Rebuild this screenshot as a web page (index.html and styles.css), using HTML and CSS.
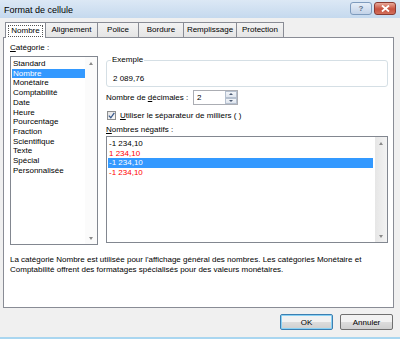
FILE: index.html
```html
<!DOCTYPE html>
<html lang="fr">
<head>
    <meta charset="UTF-8">
    <title>Format de cellule</title>
    <link rel="stylesheet" href="styles.css">
</head>
<body>
    <div class="window">
        <div class="titlebar">
            <span class="title">Format de cellule</span>
            <div class="caption-btns">
                <span class="cap-btn help">?</span>
                <span class="cap-btn close">
                    <svg width="9" height="7" viewBox="0 0 9 7"><path d="M1 0.5 L8 6.5 M8 0.5 L1 6.5" stroke="#fff" stroke-width="1.8"/></svg>
                </span>
            </div>
        </div>

        <div class="tabs">
            <div class="tab active"><span class="focus">Nombre</span></div>
            <div class="tab w-align">Alignement</div>
            <div class="tab w-police">Police</div>
            <div class="tab w-bordure">Bordure</div>
            <div class="tab w-rempl">Remplissage</div>
            <div class="tab w-prot">Protection</div>
        </div>

        <div class="panel">
            <div class="columns">
                <div class="cat-col">
                    <div class="label"><u>C</u>atégorie :</div>
                    <div class="listbox cat-list">
                        <ul class="items">
                            <li>Standard</li>
                            <li class="selected">Nombre</li>
                            <li>Monétaire</li>
                            <li>Comptabilité</li>
                            <li>Date</li>
                            <li>Heure</li>
                            <li>Pourcentage</li>
                            <li>Fraction</li>
                            <li>Scientifique</li>
                            <li>Texte</li>
                            <li>Spécial</li>
                            <li>Personnalisée</li>
                        </ul>
                        <div class="vscroll light">
                            <span class="arrow up"></span>
                            <span class="arrow down"></span>
                        </div>
                    </div>
                </div>

                <div class="opts-col">
                    <fieldset class="sample">
                        <legend>Exemple</legend>
                        <div class="sample-value">2 089,76</div>
                    </fieldset>

                    <div class="row decimals">
                        <span class="row-label">Nombre de <u>d</u>écimales :</span>
                        <div class="spin">
                            <span class="spin-value">2</span>
                            <div class="spin-btns">
                                <span class="spin-btn"><span class="arrow up"></span></span>
                                <span class="spin-btn"><span class="arrow down"></span></span>
                            </div>
                        </div>
                    </div>

                    <div class="row check">
                        <span class="checkbox">
                            <svg width="7" height="7" viewBox="0 0 7 7"><path d="M0.8 3.6 L2.8 5.8 L6.3 0.8" fill="none" stroke="#3a5a8c" stroke-width="1.3"/></svg>
                        </span>
                        <span class="row-label"><u>U</u>tiliser le séparateur de milliers ( )</span>
                    </div>

                    <div class="label"><u>N</u>ombres négatifs :</div>
                    <div class="listbox neg-list">
                        <ul class="items">
                            <li>-1 234,10</li>
                            <li class="red">1 234,10</li>
                            <li class="selected">-1 234,10</li>
                            <li class="red">-1 234,10</li>
                        </ul>
                        <div class="vscroll">
                            <span class="arrow up"></span>
                            <span class="arrow down"></span>
                        </div>
                    </div>
                </div>
            </div>

            <p class="desc">La catégorie Nombre est utilisée pour l'affichage général des nombres. Les catégories Monétaire et Comptabilité offrent des formatages spécialisés pour des valeurs monétaires.</p>
        </div>

        <div class="footer">
            <button class="btn default">OK</button>
            <button class="btn">Annuler</button>
        </div>
    </div>
</body>
</html>
```

FILE: styles.css
```css
* {
    box-sizing: border-box;
}
body {
    margin: 0;
    background: #f0f0f0;
    font-family: "Liberation Sans", Arial, sans-serif;
    font-size: 8px;
    color: #000;
}
.window {
    width: 400px;
    height: 339px;
    border-bottom: 2px solid #a9d6f0;
    overflow: hidden;
}
u {
    text-decoration: underline;
}

/* title bar */
.titlebar {
    height: 18px;
    display: flex;
    justify-content: space-between;
    align-items: center;
    padding-left: 4px;
    padding-right: 4px;
    background: linear-gradient(#dce8f5, #c5d9ee);
}
.title {
    font-size: 9px;
    margin-top: 1px;
}
.caption-btns {
    display: flex;
    gap: 2px;
    margin-top: -2px;
}
.cap-btn {
    width: 22px;
    height: 13px;
    border-radius: 3px;
    display: flex;
    align-items: center;
    justify-content: center;
    font-size: 8px;
    font-weight: bold;
}
.help {
    border: 1px solid #7e9bbd;
    background: linear-gradient(#e6eef8, #c3d3e8);
    color: #5d6f8a;
}
.close {
    border: 1px solid #8a3a32;
    background: linear-gradient(#e9a99a, #c7513f 55%, #d2705c);
}

/* tabs */
.tabs {
    display: flex;
    margin-top: 4px;
    padding-left: 5px;
    height: 15px;
    position: relative;
    z-index: 1;
}
.tab {
    height: 15px;
    border: 1px solid #898c95;
    border-bottom: none;
    border-left: none;
    background: linear-gradient(#f3f3f3, #e5e5e5);
    display: flex;
    align-items: center;
    justify-content: center;
    line-height: 10px;
}
.w-align { width: 52px; }
.w-police { width: 41px; }
.w-bordure { width: 45px; }
.w-rempl { width: 53px; }
.w-prot { width: 47px; }
.tab.active {
    border-left: 1px solid #898c95;
    background: #fff;
    height: 16px;
    width: 41px;
}
.focus {
    border: 1px dotted #555;
    padding: 0 2px;
    line-height: 10px;
}

/* panel */
.panel {
    margin-left: 3px;
    width: 391px;
    height: 271px;
    border: 1px solid #898c95;
    background: #fff;
    padding: 5px 5px 0 6px;
}
.columns {
    display: flex;
    gap: 8px;
}
.label {
    line-height: 10px;
    margin-bottom: 3px;
}
.cat-col {
    width: 88px;
}
.opts-col {
    flex: 1;
    padding-top: 13px;
}
.listbox {
    border: 1px solid #828790;
    display: flex;
    background: #fff;
}
.cat-list {
    height: 189px;
    padding: 2px 0 0 1px;
}
.neg-list {
    height: 107px;
    padding: 2px 0 0 1px;
}
.items {
    list-style: none;
    margin: 0;
    padding: 0;
    flex: 1;
}
.items li {
    line-height: 9.7px;
    padding-left: 1px;
    white-space: nowrap;
}
.items li.selected {
    background: #3399ff;
    color: #fff;
}
.items li.red {
    color: #ff0000;
}
.neg-list .items {
    margin-right: 2px;
}
.vscroll {
    width: 12px;
    margin-top: -2px;
    background: linear-gradient(90deg, #e6e6e6, #f3f3f3);
    display: flex;
    flex-direction: column;
    justify-content: space-between;
    align-items: center;
    padding: 5px 0 4px;
}
.vscroll.light {
    background: #fbfbfb;
}
.arrow {
    width: 0;
    height: 0;
    border-left: 2.5px solid transparent;
    border-right: 2.5px solid transparent;
}
.arrow.up {
    border-bottom: 3px solid #8a8a8a;
}
.arrow.down {
    border-top: 3px solid #8a8a8a;
}

/* exemple group */
.sample {
    margin: 0;
    padding: 0 0 0 6px;
    height: 31px;
    border: 1px solid #d5dfe5;
    border-radius: 3px;
}
.sample legend {
    padding: 0 1px;
    margin-left: -2px;
    line-height: 8px;
}
.sample-value {
    line-height: 10px;
    margin-top: 10px;
}

.row {
    display: flex;
    align-items: center;
}
.decimals {
    margin-top: 3px;
    height: 15px;
}
.decimals .row-label {
    width: 87px;
}
.spin {
    width: 45px;
    height: 15px;
    border: 1px solid #abadb3;
    display: flex;
    justify-content: space-between;
    padding-left: 3px;
    line-height: 13px;
}
.spin-btns {
    width: 12px;
    display: flex;
    flex-direction: column;
}
.spin-btn {
    flex: 1;
    border: 1px solid #b5c0cf;
    background: linear-gradient(#f2f5f9, #dfe5ee);
    display: flex;
    align-items: center;
    justify-content: center;
}
.spin-btn .arrow {
    border-left-width: 2px;
    border-right-width: 2px;
}
.spin-btn .arrow.up {
    border-bottom: 2px solid #4b5a73;
}
.spin-btn .arrow.down {
    border-top: 2px solid #4b5a73;
}
.check {
    margin-top: 5px;
    height: 10px;
}
.checkbox {
    width: 9px;
    height: 9px;
    border: 1px solid #8e8f8f;
    background: linear-gradient(135deg, #e4e4e4, #fafafa);
    display: flex;
    align-items: center;
    justify-content: center;
    margin: 0 4px 0 1px;
}
.opts-col .label {
    margin-top: 5px;
    margin-bottom: 1px;
}

.desc {
    margin: 10px 0 0;
    line-height: 10px;
    width: 370px;
}

/* buttons */
.footer {
    display: flex;
    justify-content: flex-end;
    gap: 7px;
    padding: 6px 7px 0 0;
}
.btn {
    width: 53px;
    height: 16px;
    font-family: "Liberation Sans", Arial, sans-serif;
    font-size: 8px;
    border: 1px solid #707070;
    border-radius: 2px;
    background: linear-gradient(#f2f2f2 50%, #dddddd 50%, #cfcfcf);
    padding: 0;
}
.btn.default {
    border-color: #3c7fb1;
    box-shadow: inset 0 0 0 1px #8ad2f5;
}
```
